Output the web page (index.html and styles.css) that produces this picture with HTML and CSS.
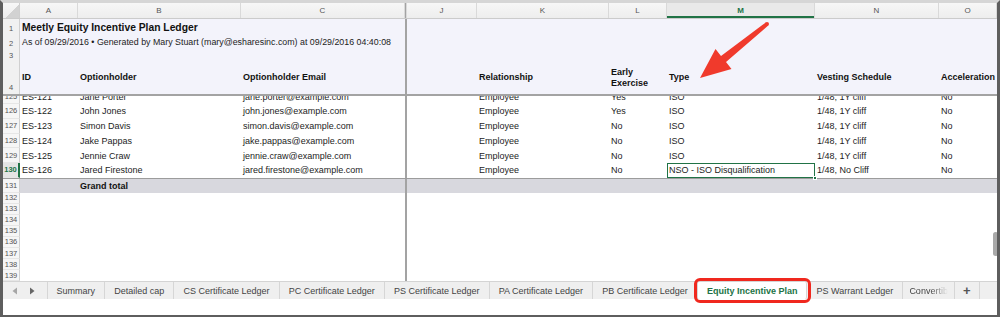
FILE: index.html
```html
<!DOCTYPE html>
<html lang="en">
<head>
    <meta charset="UTF-8">
    <meta name="viewport" content="width=device-width, initial-scale=1.0">
    <title>Equity Incentive Plan Ledger</title>
    <link rel="stylesheet" href="styles.css">
</head>
<body>
    <div class="frame">
        <div class="sheet">
            <div class="row colhead">
                <div class="corner"></div>
                <div>A</div><div>B</div><div>C</div>
                <div class="split"></div>
                <div>J</div><div>K</div><div>L</div>
                <div class="selcol">M</div><div>N</div><div>O</div>
            </div>

            <div class="row top r1">
                <div class="num">1</div>
                <div class="cell title">Meetly Equity Incentive Plan Ledger</div>
                <div class="split"></div>
            </div>
            <div class="row top r2">
                <div class="num">2</div>
                <div class="cell sub">As of 09/29/2016 &bull; Generated by Mary Stuart (mary@esharesinc.com) at 09/29/2016 04:40:08</div>
                <div class="split"></div>
            </div>
            <div class="row top r3">
                <div class="num">3</div>
                <div class="split"></div>
            </div>
            <div class="row top r4">
                <div class="num">4</div>
                <div class="cell">ID</div>
                <div class="cell">Optionholder</div>
                <div class="cell">Optionholder Email</div>
                <div class="split"></div>
                <div class="cell"></div>
                <div class="cell">Relationship</div>
                <div class="cell">Early<br>Exercise</div>
                <div class="cell">Type</div>
                <div class="cell">Vesting Schedule</div>
                <div class="cell">Acceleration</div>
            </div>

            <div class="hsplit"></div>

            <div class="row data cut">
                <div class="num">125</div>
                <div class="cell">ES-121</div>
                <div class="cell">Jane Porter</div>
                <div class="cell">jane.porter@example.com</div>
                <div class="split"></div>
                <div class="cell"></div>
                <div class="cell">Employee</div>
                <div class="cell">Yes</div>
                <div class="cell">ISO</div>
                <div class="cell">1/48, 1Y cliff</div>
                <div class="cell">No</div>
            </div>
            <div class="row data">
                <div class="num">126</div>
                <div class="cell">ES-122</div>
                <div class="cell">John Jones</div>
                <div class="cell">john.jones@example.com</div>
                <div class="split"></div>
                <div class="cell"></div>
                <div class="cell">Employee</div>
                <div class="cell">Yes</div>
                <div class="cell">ISO</div>
                <div class="cell">1/48, 1Y cliff</div>
                <div class="cell">No</div>
            </div>
            <div class="row data">
                <div class="num">127</div>
                <div class="cell">ES-123</div>
                <div class="cell">Simon Davis</div>
                <div class="cell">simon.davis@example.com</div>
                <div class="split"></div>
                <div class="cell"></div>
                <div class="cell">Employee</div>
                <div class="cell">No</div>
                <div class="cell">ISO</div>
                <div class="cell">1/48, 1Y cliff</div>
                <div class="cell">No</div>
            </div>
            <div class="row data">
                <div class="num">128</div>
                <div class="cell">ES-124</div>
                <div class="cell">Jake Pappas</div>
                <div class="cell">jake.pappas@example.com</div>
                <div class="split"></div>
                <div class="cell"></div>
                <div class="cell">Employee</div>
                <div class="cell">No</div>
                <div class="cell">ISO</div>
                <div class="cell">1/48, 1Y cliff</div>
                <div class="cell">No</div>
            </div>
            <div class="row data">
                <div class="num">129</div>
                <div class="cell">ES-125</div>
                <div class="cell">Jennie Craw</div>
                <div class="cell">jennie.craw@example.com</div>
                <div class="split"></div>
                <div class="cell"></div>
                <div class="cell">Employee</div>
                <div class="cell">No</div>
                <div class="cell">ISO</div>
                <div class="cell">1/48, 1Y cliff</div>
                <div class="cell">No</div>
            </div>
            <div class="row data">
                <div class="num active">130</div>
                <div class="cell">ES-126</div>
                <div class="cell">Jared Firestone</div>
                <div class="cell">jared.firestone@example.com</div>
                <div class="split"></div>
                <div class="cell"></div>
                <div class="cell">Employee</div>
                <div class="cell">No</div>
                <div class="cell selected">NSO - ISO Disqualification</div>
                <div class="cell">1/48, No Cliff</div>
                <div class="cell">No</div>
            </div>
            <div class="row data total">
                <div class="num">131</div>
                <div class="cell"></div>
                <div class="cell bold">Grand total</div>
                <div class="cell"></div>
                <div class="split"></div>
            </div>

            <div class="row empty"><div class="num">132</div><div class="split"></div></div>
            <div class="row empty"><div class="num">133</div><div class="split"></div></div>
            <div class="row empty"><div class="num">134</div><div class="split"></div></div>
            <div class="row empty"><div class="num">135</div><div class="split"></div></div>
            <div class="row empty"><div class="num">136</div><div class="split"></div></div>
            <div class="row empty"><div class="num">137</div><div class="split"></div></div>
            <div class="row empty"><div class="num">138</div><div class="split"></div></div>
            <div class="row empty"><div class="num">139</div><div class="split"></div></div>
        </div>

        <div class="tabs">
            <div class="nav">
                <svg width="6" height="8" viewBox="0 0 6 8"><path d="M5 0.5 L0.5 4 L5 7.5 Z" fill="#a6a6a6"/></svg>
                <svg width="6" height="8" viewBox="0 0 6 8"><path d="M1 0.5 L5.5 4 L1 7.5 Z" fill="#666"/></svg>
            </div>
            <div class="tab">Summary</div>
            <div class="tab">Detailed cap</div>
            <div class="tab">CS Certificate Ledger</div>
            <div class="tab">PC Certificate Ledger</div>
            <div class="tab">PS Certificate Ledger</div>
            <div class="tab">PA Certificate Ledger</div>
            <div class="tab">PB Certificate Ledger</div>
            <div class="tab current">Equity Incentive Plan</div>
            <div class="tab">PS Warrant Ledger</div>
            <div class="tab clipped"><span>Convertib</span></div>
            <div class="tab add">+</div>
        </div>
        <div class="status"></div>

        <div class="scroll-thumb"></div>
        <svg class="arrow" width="1000" height="317" viewBox="0 0 1000 317">
            <polygon points="700,78 715.5,49 721,56 765.8,22.4 768.2,25.6 726,62 731.5,69" fill="#f03a2c"/>
            <circle cx="767" cy="24" r="2" fill="#f03a2c"/>
        </svg>
    </div>
</body>
</html>
```

FILE: styles.css
```css
body {
    margin: 0;
    font-family: "Liberation Sans", Arial, sans-serif;
    background-color: #fff;
}

.frame {
    position: relative;
    width: 1000px;
    height: 317px;
    box-sizing: border-box;
    border-top: 3px solid #d6d6d6;
    border-left: 3px solid #5e5e5e;
    border-right: 3px solid #5e5e5e;
    border-bottom: 2px solid #5e5e5e;
    display: flex;
    flex-direction: column;
    overflow: hidden;
}

.sheet {
    height: 278px;
    overflow: hidden;
    display: flex;
    flex-direction: column;
}

.row {
    display: grid;
    grid-template-columns: 17px 58px 163px 164px 2px 70px 132px 58px 148px 124px 1fr;
    flex-shrink: 0;
    font-size: 9px;
    color: #1c1c1c;
}

.split {
    grid-column: 5;
    background-color: #a3a3a3;
}

.num {
    box-sizing: border-box;
    border-right: 1px solid #d0d0d0;
    background-color: #f6f6f6;
    color: #555;
    font-size: 7.5px;
    text-align: center;
    display: flex;
    justify-content: center;
}

.cell {
    padding-left: 2px;
    white-space: nowrap;
    display: flex;
}

/* column letters */
.colhead {
    height: 16px;
    background: linear-gradient(#f7f7f7, #ededed);
    border-bottom: 1px solid #cbcbcb;
    box-sizing: border-box;
    font-size: 8px;
    color: #555;
}

.colhead > div {
    display: flex;
    align-items: center;
    justify-content: center;
    border-right: 1px solid #d9d9d9;
}

.colhead .corner {
    background: linear-gradient(135deg, transparent 55%, #d2d2d2 56%);
    border-right: 1px solid #cfcfcf;
}

.colhead .selcol {
    color: #217346;
    font-weight: bold;
    background: #e9e9e9;
    box-shadow: inset 0 -2px 0 #217346;
}

/* frozen header rows */
.top {
    background-color: #f3f3fb;
}

.top .num {
    background-color: #f1f1f1;
    align-items: flex-end;
    line-height: 9px;
    padding-bottom: 1px;
}

.top .cell {
    align-items: flex-end;
    line-height: 11px;
    padding-bottom: 1px;
}

.r1 { height: 15px; }
.r2 { height: 15px; }
.r3 { height: 12px; }
.r4 { height: 33px; }

.title {
    grid-column: 2 / 5;
    font-size: 10.3px;
    font-weight: bold;
    color: #111;
}

.sub {
    grid-column: 2 / 5;
    font-size: 8.85px;
    color: #1c1c1c;
}

.r4 .cell {
    align-items: center;
    font-weight: bold;
    color: #111;
    padding-bottom: 0;
}

.r4 .num {
    padding-bottom: 2px;
}

.hsplit {
    height: 2px;
    flex-shrink: 0;
    background-color: #a3a3a3;
}

/* data rows */
.data {
    height: 14.75px;
}

.data .cell,
.data .num {
    align-items: center;
}

.data .num {
    border-bottom: 1px solid #e6e6e6;
    box-sizing: border-box;
}

.cut {
    height: 8px;
    overflow: hidden;
}

.cut > div {
    height: 14.75px;
    margin-top: -6.75px;
}

.num.active {
    color: #217346;
    font-weight: bold;
    background-color: #e4e4e4;
    border-right: 2px solid #217346;
}

.selected {
    position: relative;
    outline: 1.5px solid #217346;
    outline-offset: -1px;
}

.selected::after {
    content: "";
    position: absolute;
    right: -2px;
    bottom: -2px;
    width: 4px;
    height: 4px;
    background-color: #217346;
    border: 1px solid #fff;
    box-sizing: border-box;
}

.total {
    background-color: #d8d8de;
    border-top: 1px solid #9c9c9c;
    box-sizing: border-box;
}

.total .num {
    background-color: #f6f6f6;
}

.bold {
    font-weight: bold;
    color: #111;
}

.empty {
    height: 11.1px;
}

.empty .num {
    align-items: center;
    border-bottom: 1px solid #e6e6e6;
    box-sizing: border-box;
}

/* sheet tabs */
.tabs {
    height: 18px;
    box-sizing: border-box;
    border-top: 1px solid #d4d4d4;
    background-color: #efefef;
    display: flex;
    font-size: 9px;
    color: #444;
}

.nav {
    width: 44.5px;
    display: flex;
    align-items: center;
    gap: 11px;
    padding-left: 9px;
    box-sizing: border-box;
    border-right: 1px solid #d6d6d6;
}

.tab {
    display: flex;
    align-items: center;
    padding: 0 9.1px;
    border-right: 1px solid #d6d6d6;
    white-space: nowrap;
}

.tab.current {
    position: relative;
    z-index: 1;
    background-color: #fff;
    color: #217346;
    font-weight: bold;
    padding: 0 9px;
    outline: 3px solid #f0281e;
    outline-offset: 1px;
    border-radius: 2px;
}

.tab.clipped span {
    -webkit-mask-image: linear-gradient(to right, #000 55%, transparent 100%);
    mask-image: linear-gradient(to right, #000 55%, transparent 100%);
}

.tab.clipped {
    padding: 0 6px;
}

.tab.add {
    padding: 0 8px;
    font-size: 13px;
    font-weight: bold;
    color: #555;
}

.status {
    flex: 1;
    background-color: #fff;
}

.scroll-thumb {
    position: absolute;
    left: 990px;
    top: 229px;
    width: 5px;
    height: 24px;
    border-radius: 3px;
    background-color: #a9a9a9;
}

.arrow {
    position: absolute;
    left: -3px;
    top: -3px;
    pointer-events: none;
}
```
